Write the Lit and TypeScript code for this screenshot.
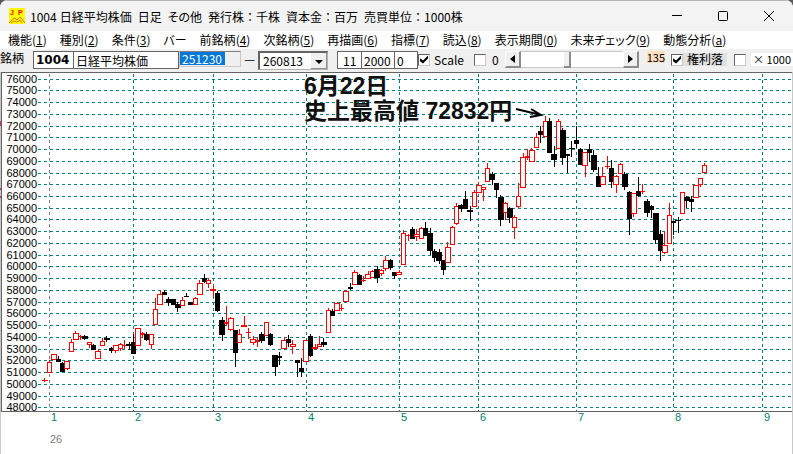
import { LitElement, html, svg, css } from "lit";
import { customElement } from "lit/decorators.js";

/* kind, wick x, high, body top, body bottom, low, body left, body width */
type Candle = [string, number, number, number, number, number, number, number];

const CANDLES: Candle[] = [
  ["r", 44, 378, 380, 380, 381, 42, 6], ["r", 49, 360, 362, 372, 372, 47, 5],
  ["r", 54, 354, 354, 359, 359, 51, 6], ["b", 58, 356, 359, 361, 361, 56, 5],
  ["b", 62, 362, 363, 371, 371, 60, 5], ["r", 67, 361, 361, 368, 369, 64, 6],
  ["r", 71, 339, 342, 351, 351, 69, 5], ["r", 75, 331, 333, 339, 339, 73, 6],
  ["r", 80, 335, 336, 336, 339, 78, 5], ["b", 84, 335, 336, 338, 339, 82, 6],
  ["r", 89, 342, 342, 344, 347, 87, 5], ["b", 93, 344, 345, 349, 349, 91, 5],
  ["r", 98, 349, 351, 358, 358, 95, 6], ["r", 102, 338, 341, 345, 345, 100, 5],
  ["b", 106, 336, 338, 339, 341, 104, 6], ["b", 111, 347, 348, 350, 352, 109, 5],
  ["r", 115, 345, 345, 350, 352, 113, 6], ["r", 120, 343, 344, 348, 350, 118, 5],
  ["r", 124, 340, 345, 345, 348, 122, 5], ["b", 129, 342, 344, 345, 349, 126, 6],
  ["b", 133, 334, 342, 353, 353, 131, 5], ["r", 137, 328, 328, 345, 345, 135, 6],
  ["r", 142, 332, 333, 334, 337, 140, 5], ["b", 146, 332, 334, 339, 340, 144, 5],
  ["r", 151, 334, 334, 344, 348, 149, 5], ["r", 155, 298, 309, 324, 324, 153, 5],
  ["r", 160, 290, 294, 304, 304, 157, 6], ["b", 164, 290, 292, 294, 294, 162, 5],
  ["b", 168, 297, 299, 302, 305, 166, 6], ["b", 173, 299, 299, 304, 304, 171, 5],
  ["b", 177, 302, 304, 307, 311, 175, 6], ["r", 182, 297, 300, 305, 305, 180, 5],
  ["b", 186, 293, 296, 296, 296, 184, 5], ["b", 190, 302, 302, 304, 304, 188, 5],
  ["r", 195, 297, 298, 304, 304, 193, 5], ["r", 199, 280, 283, 294, 294, 197, 6],
  ["b", 204, 274, 278, 281, 282, 202, 5], ["r", 208, 278, 280, 283, 287, 206, 5],
  ["r", 213, 286, 289, 290, 297, 210, 6], ["b", 217, 291, 293, 310, 311, 215, 5],
  ["b", 222, 317, 320, 334, 340, 219, 6], ["r", 226, 306, 322, 323, 325, 224, 5],
  ["r", 230, 317, 318, 329, 330, 228, 6], ["b", 235, 330, 330, 352, 366, 233, 5],
  ["r", 239, 329, 334, 342, 342, 237, 5], ["r", 244, 316, 325, 326, 326, 241, 6],
  ["r", 248, 328, 332, 332, 338, 246, 5], ["r", 253, 336, 339, 342, 344, 250, 6],
  ["r", 257, 337, 340, 341, 346, 255, 5], ["b", 261, 332, 334, 340, 342, 259, 6],
  ["r", 266, 322, 322, 335, 335, 264, 5], ["b", 270, 333, 334, 344, 345, 268, 5],
  ["b", 275, 355, 355, 366, 375, 272, 6], ["b", 279, 352, 356, 357, 364, 277, 5],
  ["r", 284, 337, 340, 348, 348, 281, 6], ["b", 288, 335, 339, 342, 346, 286, 5],
  ["r", 292, 340, 344, 346, 353, 290, 6], ["b", 297, 360, 360, 362, 376, 295, 5],
  ["b", 301, 358, 368, 371, 376, 299, 5], ["r", 306, 340, 340, 361, 361, 303, 6],
  ["b", 310, 334, 336, 355, 356, 308, 5], ["r", 315, 344, 347, 348, 349, 312, 6],
  ["r", 319, 336, 344, 346, 346, 317, 5], ["b", 323, 338, 342, 344, 346, 321, 6],
  ["r", 328, 308, 310, 332, 332, 326, 5], ["b", 332, 309, 311, 315, 315, 330, 5],
  ["r", 337, 302, 303, 310, 310, 334, 6], ["r", 341, 304, 308, 308, 310, 339, 5],
  ["r", 346, 290, 291, 301, 301, 343, 6], ["b", 350, 283, 287, 288, 289, 348, 5],
  ["r", 354, 270, 272, 284, 284, 352, 6], ["b", 359, 274, 275, 284, 284, 357, 5],
  ["r", 363, 276, 280, 280, 281, 361, 5], ["r", 368, 271, 274, 278, 278, 365, 6],
  ["r", 372, 270, 271, 277, 277, 370, 5], ["b", 377, 266, 269, 277, 282, 374, 6],
  ["r", 381, 269, 270, 273, 275, 379, 5], ["r", 385, 256, 260, 268, 270, 383, 6],
  ["b", 390, 259, 260, 267, 269, 388, 5], ["b", 394, 272, 272, 275, 278, 392, 5],
  ["r", 399, 270, 272, 274, 274, 396, 6], ["r", 403, 230, 233, 264, 264, 401, 5],
  ["r", 408, 234, 235, 235, 240, 405, 5], ["b", 412, 227, 229, 238, 238, 410, 5],
  ["r", 416, 229, 234, 236, 240, 414, 6], ["r", 421, 227, 228, 238, 238, 419, 5],
  ["b", 425, 222, 228, 235, 235, 423, 5], ["b", 430, 228, 233, 250, 254, 427, 6],
  ["b", 434, 249, 251, 257, 261, 432, 5], ["b", 439, 249, 252, 260, 263, 436, 6],
  ["b", 443, 260, 260, 269, 274, 441, 5], ["r", 447, 242, 247, 262, 262, 445, 6],
  ["r", 452, 226, 227, 244, 244, 450, 5], ["r", 456, 203, 206, 223, 224, 454, 5],
  ["b", 461, 204, 205, 208, 211, 458, 5], ["b", 465, 191, 199, 208, 208, 463, 5],
  ["b", 470, 206, 210, 211, 220, 467, 6], ["r", 474, 190, 192, 206, 206, 472, 5],
  ["r", 478, 182, 185, 192, 192, 476, 6], ["r", 483, 187, 187, 189, 200, 481, 5],
  ["r", 487, 163, 168, 181, 181, 485, 5], ["b", 492, 172, 174, 179, 184, 489, 6],
  ["b", 496, 183, 183, 189, 197, 494, 5], ["b", 500, 195, 197, 219, 225, 498, 6],
  ["r", 505, 202, 203, 212, 219, 503, 5], ["b", 509, 207, 208, 217, 222, 507, 6],
  ["r", 514, 215, 217, 227, 238, 512, 5], ["r", 518, 183, 196, 206, 207, 516, 5],
  ["r", 523, 153, 157, 187, 187, 520, 6], ["r", 527, 149, 156, 157, 159, 525, 5],
  ["r", 531, 148, 150, 161, 161, 529, 6], ["r", 536, 133, 137, 147, 147, 534, 5],
  ["b", 540, 126, 131, 134, 142, 538, 5], ["r", 545, 116, 121, 136, 136, 543, 5],
  ["b", 549, 118, 121, 152, 152, 547, 5], ["b", 554, 146, 154, 159, 166, 551, 6],
  ["r", 558, 119, 121, 148, 148, 556, 5], ["b", 562, 128, 130, 157, 164, 560, 6],
  ["b", 567, 154, 154, 155, 172, 565, 5], ["b", 571, 141, 148, 148, 156, 569, 6],
  ["b", 576, 126, 140, 143, 147, 574, 5], ["b", 580, 148, 149, 164, 164, 578, 5],
  ["r", 585, 152, 152, 165, 176, 582, 6], ["b", 589, 144, 149, 152, 161, 587, 5],
  ["b", 593, 150, 155, 169, 171, 591, 6], ["b", 598, 167, 176, 186, 186, 596, 5],
  ["r", 602, 167, 176, 184, 184, 600, 6], ["r", 607, 156, 166, 166, 168, 605, 5],
  ["b", 611, 160, 168, 181, 187, 609, 5], ["r", 616, 175, 176, 184, 192, 613, 6],
  ["r", 620, 163, 164, 173, 173, 618, 5], ["b", 624, 172, 174, 186, 189, 622, 6],
  ["b", 629, 191, 192, 218, 234, 627, 5], ["r", 633, 193, 193, 213, 216, 631, 6],
  ["b", 638, 177, 191, 195, 196, 636, 5], ["r", 642, 184, 191, 191, 193, 640, 5],
  ["b", 647, 199, 201, 212, 216, 644, 6], ["b", 651, 205, 206, 209, 217, 649, 5],
  ["b", 655, 213, 213, 239, 243, 653, 6], ["b", 660, 230, 234, 250, 260, 658, 5],
  ["r", 664, 232, 245, 252, 253, 662, 6], ["r", 669, 203, 215, 243, 243, 667, 5],
  ["b", 673, 221, 221, 222, 234, 671, 5], ["b", 678, 217, 220, 220, 232, 675, 6],
  ["r", 682, 192, 192, 213, 213, 680, 5], ["b", 686, 196, 197, 200, 207, 684, 6],
  ["b", 691, 196, 199, 201, 211, 689, 5], ["r", 695, 185, 185, 197, 197, 693, 6],
  ["r", 700, 178, 178, 184, 186, 698, 5], ["r", 704, 163, 165, 172, 172, 702, 5],
];

const PRICE_LINES = [
  79, 90, 102, 114, 126, 137, 149, 161, 173, 184, 196, 208, 219, 231, 243,
  255, 266, 278, 290, 302, 313, 325, 337, 349, 360, 372, 384, 396, 407,
];
const MONTH_LINES = [49, 133, 213, 306, 399, 478, 576, 673, 762];

const MENU: [string, string][] = [
  ["機能", "1"], ["種別", "2"], ["条件", "3"], ["バー", ""], ["前銘柄", "4"],
  ["次銘柄", "5"], ["再描画", "6"], ["指標", "7"], ["読込", "8"],
  ["表示期間", "0"], ["未来チェック", "9"], ["動態分析", "a"],
];

@customElement("price-chart")
export class PriceChart extends LitElement {
  static styles = css`
    :host { display: block; }
    .chart {
      display: block;
      width: 100%;
      height: auto;
      background: #fff;
      font-family: "Liberation Sans", sans-serif;
      font-size: 11px;
    }
    .crisp { shape-rendering: crispEdges; }
    .grid { stroke: #008080; stroke-dasharray: 3 3; }
    .year-start { stroke: #808080; }
    .frame { stroke: #646464; fill: none; }
    .edge { fill: #c8c8c8; }
    .mark { fill: #c8327d; }
    .up { fill: #fff; stroke: #f00; }
    .up-line { fill: #f00; }
    .down { fill: #000; }
    .price { fill: #000; text-anchor: end; }
    .month { fill: #008070; text-anchor: middle; }
    .year { fill: #808080; }
    .note {
      font: 700 23px "Liberation Sans", "Noto Sans CJK JP", sans-serif;
      fill: #111;
    }
    .arrow { stroke: #000; stroke-width: 2; fill: none; }
  `;

  private candle([kind, x, high, top, bottom, low, left, width]: Candle) {
    const line = kind === "r" ? "up-line" : "down";
    const hollow = kind === "r" && bottom - top > 1;
    return svg`
      <rect class=${line} x=${x} y=${high} width="1" height=${low - high + 1}></rect>
      ${hollow
        ? svg`<rect class="up" x=${left + 0.5} y=${top + 0.5} width=${width - 1} height=${bottom - top}></rect>`
        : svg`<rect class=${line} x=${left} y=${top} width=${width} height=${bottom - top + 1}></rect>`}`;
  }

  render() {
    return html`
      <svg class="chart" viewBox="0 72 793 382" role="img" aria-label="日経平均株価 日足">
        <g class="crisp">
          ${PRICE_LINES.map((y) => svg`<path class="grid" d="M38 ${y + 0.5}H791"></path>`)}
          ${MONTH_LINES.map((x, i) => svg`<path class="grid ${i === 0 ? "year-start" : ""}" d="M${x + 0.5} 74V411"></path>`)}
          ${CANDLES.map((c) => this.candle(c))}
          <path class="frame" d="M792 72.5H1.5V411.5H792"></path>
          <rect class="edge" x="0" y="72" width="1" height="382"></rect>
          <rect class="edge" x="792" y="72" width="1" height="382"></rect>
          <rect class="mark" x="0" y="121" width="1" height="5"></rect>
          <rect class="mark" x="0" y="188" width="1" height="2"></rect>
          <rect class="mark" x="0" y="196" width="1" height="2"></rect>
        </g>
        ${PRICE_LINES.map((y, i) => svg`<text class="price" x="37" y=${y + 4}>${76000 - i * 1000}</text>`)}
        ${MONTH_LINES.map((x, i) => svg`<text class="month" x=${x + 5} y="421">${i + 1}</text>`)}
        <text class="year" x="50" y="443">26</text>
        <text class="note" x="304" y="94">6月22日</text>
        <text class="note" x="304" y="119">史上最高値 72832円</text>
        <path class="arrow" d="M516 109L541 115M531 109L541 115L530 117"></path>
      </svg>`;
  }
}

@customElement("app-root")
export class AppRoot extends LitElement {
  static styles = css`
    :host {
      display: block;
      background: #5a5a5a;
      font-family: "Noto Sans CJK JP", sans-serif;
      font-size: 12px;
      color: #000;
    }
    * { box-sizing: border-box; }
    button, input, select { font: inherit; color: inherit; margin: 0; padding: 0; border-radius: 0; }
    .window { border-radius: 8px 8px 0 0; overflow: hidden; background: #fff; }
    .title-bar {
      display: flex;
      align-items: center;
      height: 31px;
      padding: 0 12px 0 9px;
      background: #f3f3f3;
      border-top: 1px solid #b4b4b4;
    }
    .app-icon { width: 16px; height: 16px; margin-right: 5px; flex: none; }
    .icon-text { font: 700 7px "Liberation Sans", sans-serif; fill: #f00; }
    .title { display: flex; gap: 6px; font: inherit; margin: 0; white-space: nowrap; }
    .title span { font-feature-settings: "palt"; }
    .title .plain { font-feature-settings: normal; }
    .title .code { margin-right: -3px; }
    .window-buttons { display: flex; gap: 22px; margin-left: auto; }
    .window-buttons button { width: 24px; height: 24px; border: 0; background: none; }
    .window-buttons svg { display: block; margin: auto; }
    .menu {
      display: flex;
      align-items: center;
      gap: 13px;
      height: 18px;
      padding-left: 8px;
      background: #fff;
      white-space: nowrap;
    }
    .menu button { border: 0; background: none; line-height: 18px; font-feature-settings: "palt"; }
    .menu u { text-underline-offset: 1px; }
    .tools {
      display: flex;
      align-items: flex-start;
      height: 23px;
      padding-top: 2px;
      background: #f0f0f0;
      white-space: nowrap;
      line-height: 16px;
    }
    .tools > * { flex: none; }
    .name-label { width: 33px; line-height: 14px; }
    .box {
      height: 18px;
      border: 1px solid #646464;
      border-left-width: 0;
      background: #fff;
      padding-left: 2px;
    }
    .code-box { width: 41px; border-left-width: 1px; font: 700 12px "DejaVu Sans", sans-serif; }
    .name-box { width: 105px; }
    .start {
      display: flex;
      width: 62px;
      height: 16px;
      border: 1px solid #c8c8c8;
      border-top-color: #808080;
    }
    .start input { width: 45px; height: 13px; border: 0; background: #0078d7; color: #fff; padding-left: 2px; }
    .dash { width: 17px; text-align: center; }
    .combo { position: relative; width: 70px; height: 19px; }
    .combo select {
      appearance: none;
      width: 100%;
      height: 100%;
      padding-left: 3px;
      background: #fff;
      border: 1px solid #b4b4b4;
      border-top: 2px solid #646464;
      border-left: 2px solid #646464;
    }
    .combo svg { position: absolute; right: 1px; top: 2px; pointer-events: none; }
    .numbers { display: flex; margin-left: 9px; }
    .days { width: 25px; padding-left: 5px; border-left-width: 1px; }
    .count { width: 33px; }
    .offset { width: 23px; }
    .check { display: flex; align-items: center; height: 17px; }
    .check input {
      appearance: none;
      display: grid;
      place-items: center;
      width: 12px;
      height: 12px;
      margin-right: 4px;
      background: #fff;
      border: 1px solid #c8c8c8;
      border-top-color: #646464;
      border-left-color: #646464;
    }
    .check input:checked::before {
      content: "";
      width: 8px;
      height: 8px;
      background: #000;
      clip-path: polygon(0 35%, 38% 62%, 100% 0, 100% 38%, 38% 100%, 0 72%);
    }
    .zero { margin-left: 10px; }
    .zero input { margin-right: 6px; }
    .scroll { display: flex; flex: 1 1 0; min-width: 80px; height: 17px; margin-left: 6px; }
    .scroll button {
      width: 16px;
      flex: none;
      background: #f0f0f0;
      border: 1px solid #fff;
      border-right: 2px solid #8c8c8c;
      border-bottom: 2px solid #8c8c8c;
    }
    .scroll svg { display: block; margin: auto; }
    .scroll input {
      appearance: none;
      flex: 1;
      min-width: 0;
      height: 17px;
      background: #fff;
      border: solid #c8c8c8;
      border-width: 1px 0;
    }
    .scroll input::-webkit-slider-thumb {
      appearance: none;
      width: 7px;
      height: 16px;
      background: #f0f0f0;
      border-right: 2px solid #8c8c8c;
      border-bottom: 2px solid #8c8c8c;
    }
    .points { margin-left: 8px; background: #ffdfbf; height: 12px; line-height: 12px; font-size: 11px; }
    .rights { margin-left: 6px; }
    .rights input, .thousand input { margin-right: 0; }
    .rights span { background: #e0e0e0; height: 13px; line-height: 12px; padding: 0 4px; }
    .thousand { margin-left: 7px; }
    .thousand span { background: #fff; margin-left: 5px; line-height: 13px; padding: 0 2px; font-size: 11px; }
  `;

  render() {
    return html`
      <main class="window">
        <header class="title-bar">
          <svg class="app-icon" viewBox="0 0 16 16" aria-hidden="true">
            <rect width="16" height="16" fill="#ff0"></rect>
            <text class="icon-text" x="1" y="7">J</text>
            <text class="icon-text" x="9" y="7">P</text>
            <path d="M0 15L4 11L6 10L8 12L11 9L12 10L16 15M2 15L5 13L8 14L11 12L13 15" fill="none" stroke="#e07000"></path>
          </svg>
          <h1 class="title">
            <span class="code">1004</span><span class="plain">日経平均株価</span><span class="plain">日足</span><span>その他</span>
            <span class="plain">発行株：千株</span><span class="plain">資本金：百万</span><span class="plain">売買単位：1000株</span>
          </h1>
          <div class="window-buttons">
            <button aria-label="最小化"><svg width="10" height="10"><path d="M0 4.5H10" stroke="#000"></path></svg></button>
            <button aria-label="最大化"><svg width="10" height="10"><rect x=".5" y=".5" width="9" height="9" rx="1" fill="none" stroke="#000"></rect></svg></button>
            <button aria-label="閉じる"><svg width="10" height="10"><path d="M0 0L10 10M10 0L0 10" stroke="#000"></path></svg></button>
          </div>
        </header>
        <nav class="menu">
          ${MENU.map(([label, key]) => html`<button>${label}${key ? html`(<u>${key}</u>)` : ""}</button>`)}
        </nav>
        <section class="tools">
          <label class="name-label" for="code">銘柄</label>
          <input class="box code-box" id="code" value="1004" />
          <input class="box name-box" aria-label="銘柄名" value="日経平均株価" />
          <div class="start"><input aria-label="開始日" value="251230" /></div>
          <span class="dash">—</span>
          <div class="combo">
            <select aria-label="終了日"><option>260813</option></select>
            <svg width="16" height="16" aria-hidden="true">
              <path d="M0 0H16V16H0Z" fill="#8c8c8c"></path>
              <path d="M0 0H15V15H0Z" fill="#f0f0f0"></path>
              <path d="M4 7H12L8 11Z"></path>
            </svg>
          </div>
          <div class="numbers">
            <input class="box days" aria-label="日数" value="11" />
            <input class="box count" aria-label="本数" value="2000" />
            <input class="box offset" aria-label="ずらし" value="0" />
          </div>
          <label class="check"><input type="checkbox" checked /><span>Scale</span></label>
          <label class="check zero"><input type="checkbox" /><span>0</span></label>
          <div class="scroll">
            <button aria-label="前へ"><svg width="5" height="8"><path d="M5 0V8L0 4Z"></path></svg></button>
            <input type="range" aria-label="表示位置" min="0" max="100" value="46" />
            <button aria-label="次へ"><svg width="5" height="8"><path d="M0 0V8L5 4Z"></path></svg></button>
          </div>
          <span class="points">135</span>
          <label class="check rights"><input type="checkbox" checked /><span>権利落</span></label>
          <label class="check thousand"><input type="checkbox" /><span>× 1000</span></label>
        </section>
        <price-chart></price-chart>
      </main>`;
  }
}
